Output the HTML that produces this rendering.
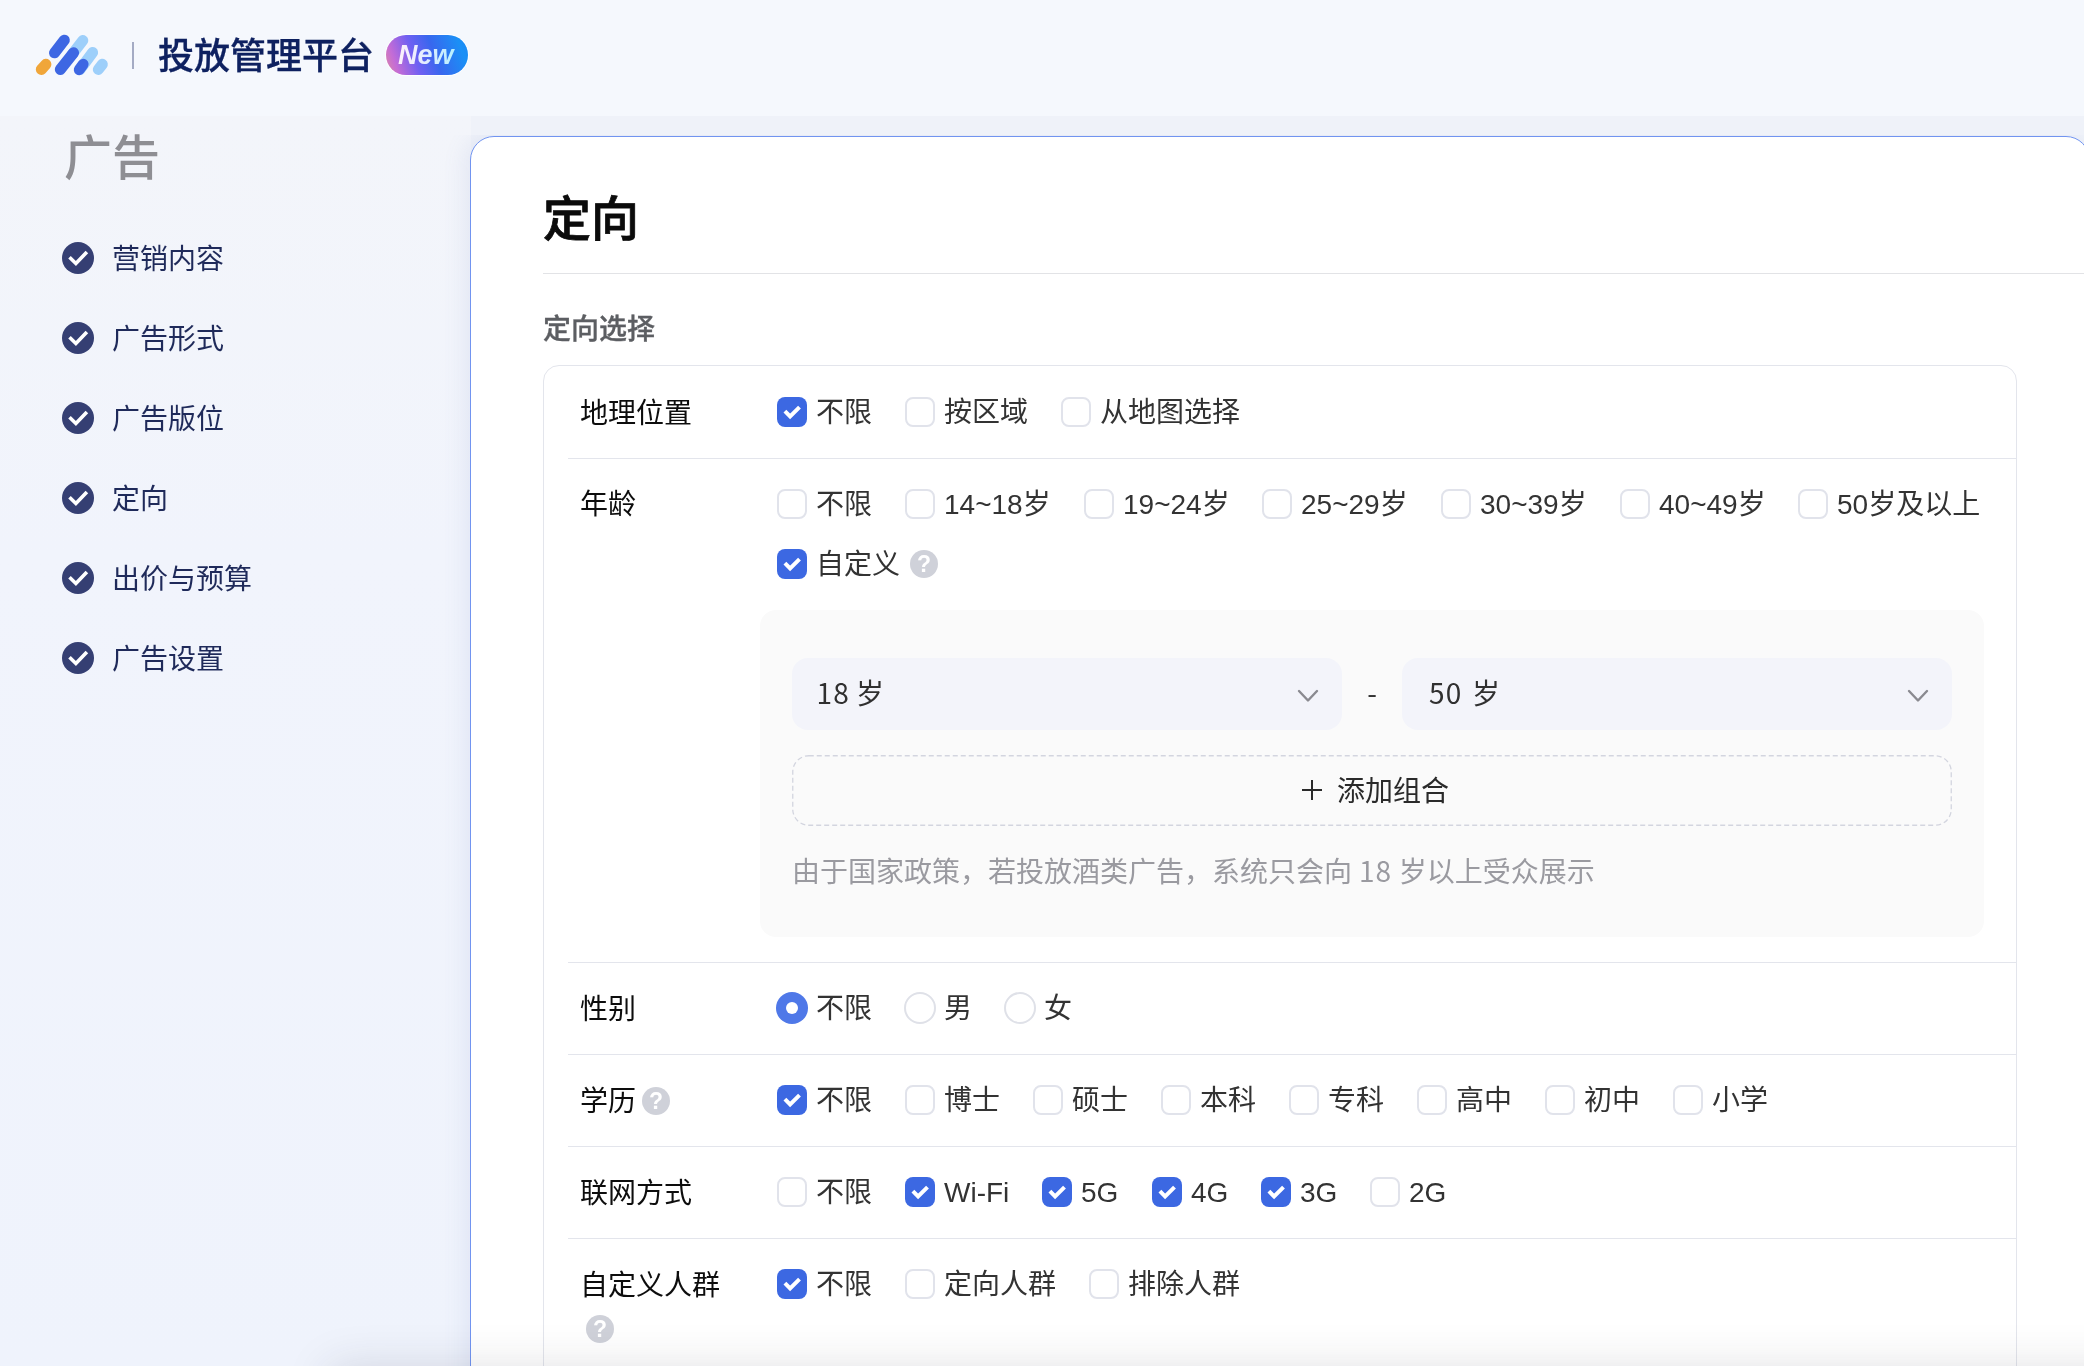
<!DOCTYPE html>
<html lang="zh-CN">
<head>
<meta charset="utf-8">
<title>投放管理平台</title>
<style>
*{box-sizing:border-box;margin:0;padding:0}
html,body{width:2084px;height:1366px;overflow:hidden}
body{position:relative;background:#eff2f9;font-family:"Liberation Sans","Noto Sans CJK SC",sans-serif;color:#333;-webkit-font-smoothing:antialiased}
.abs{position:absolute}
#root{position:absolute;left:0;top:0;width:2084px;height:1366px;overflow:hidden;will-change:transform;transform:translateZ(0)}
#header{position:absolute;left:0;top:0;width:2084px;height:116px;background:#f5f8fd}
#logo{position:absolute;left:30px;top:30px;width:84px;height:50px}
#hdiv{position:absolute;left:132px;top:42px;width:2px;height:27px;background:#a4abc4}
#title{position:absolute;left:158px;top:27px;font-size:36px;line-height:52px;font-weight:500;color:#0e2160;-webkit-text-stroke:0.3px #0e2160;letter-spacing:0;white-space:nowrap;font-family:"Noto Sans CJK SC",sans-serif}
#new{position:absolute;left:386px;top:35px;width:82px;height:40px;border-radius:20px;background:linear-gradient(70deg,#dd8aa4 0%,#c46cd6 14%,#7060f2 36%,#3867ee 58%,#1a90f6 88%,#1b86f4 100%);box-shadow:0 0 0 1px rgba(255,255,255,0.9);font-size:27px;line-height:40px;font-weight:700;font-style:italic;text-align:center;font-family:"Liberation Sans",sans-serif}
#new span{color:transparent;background:linear-gradient(90deg,#fff0fb 0%,#e6ecff 45%,#b6f0ff 100%);-webkit-background-clip:text;background-clip:text;padding:0 2px;position:relative;left:-1.3px}
#side{position:absolute;left:0;top:116px;width:471px;height:1250px;background:linear-gradient(180deg,#f3f5fa 0%,#f1f4fc 35%,#eff3fc 100%)}
#sidetitle{position:absolute;left:64px;top:120px;font-size:48px;line-height:68px;font-weight:500;color:#8e8e93;font-family:"Noto Sans CJK SC",sans-serif;white-space:nowrap}
.step{position:absolute;left:62px;height:40px;white-space:nowrap}
.step svg{position:absolute;left:0;top:4px;width:32px;height:32px}
.step span{position:absolute;left:50px;top:-1px;font-size:28px;line-height:40px;color:#1f2a5a;font-family:"Noto Sans CJK SC",sans-serif}
#card{position:absolute;left:470px;top:136px;width:1620px;height:1300px;background:#fff;border:1px solid #7194f0;border-radius:24px;box-shadow:-6px 0 22px rgba(100,120,190,0.10);clip-path:inset(-1px 0px 0px -60px)}
#h1{position:absolute;left:543px;top:181px;font-size:48px;line-height:68px;font-weight:500;color:#0b0b0b;-webkit-text-stroke:0.8px #0b0b0b;font-family:"Noto Sans CJK SC",sans-serif;white-space:nowrap}
#hline{position:absolute;left:543px;top:273px;width:1541px;height:1px;background:#e2e3e6}
#sub{position:absolute;left:543px;top:307px;font-size:28px;line-height:40px;font-weight:500;color:#5c5e62;-webkit-text-stroke:0.35px #5c5e62;font-family:"Noto Sans CJK SC",sans-serif;white-space:nowrap}
#box{position:absolute;left:543px;top:365px;width:1474px;height:1100px;border:1px solid #e3e5ec;border-radius:16px;background:#fff}
.sep{position:absolute;left:568px;width:1448px;height:1px;background:#e3e5ec}
.lbl{position:absolute;left:580px;margin-top:-1px;font-size:28px;line-height:40px;color:#0d0d0d;font-family:"Noto Sans CJK SC",sans-serif;white-space:nowrap}
.opt{position:absolute;height:40px;white-space:nowrap;font-size:28px;line-height:40px;color:#333}
.opt i{position:absolute;left:0;top:5px;width:30px;height:30px;border:2px solid #e1e3eb;border-radius:8px;background:#fff;display:block}
.opt.on i{border:none;background:#3c68e2}
.opt.on i svg{position:absolute;left:0;top:0;width:30px;height:30px}
.opt.r i{border-radius:50%;width:32px;height:32px;top:4px;left:-1px;border-color:#dfe1e8}
.opt.r.on i{background:#4f78e8}
.opt.r.on i:after{content:"";position:absolute;left:10px;top:10px;width:12px;height:12px;border-radius:50%;background:#fff}
.opt span{position:absolute;left:39px;top:1px;font-family:"Liberation Sans","Noto Sans CJK SC",sans-serif}
.q{position:absolute;width:28px;height:28px}
#agebox{position:absolute;left:760px;top:610px;width:1224px;height:327px;border-radius:16px;background:#fafafa}
.sel{position:absolute;top:658px;width:550px;height:72px;border-radius:16px;background:#f3f4fa;font-size:28px;line-height:68px;color:#303030;padding-left:27px;word-spacing:2px;letter-spacing:1.2px;font-family:"Noto Sans CJK SC",sans-serif;white-space:nowrap}
.sel svg{position:absolute;right:22px;top:28.5px;width:24px;height:18px}
#dash{position:absolute;left:1342px;top:658px;width:60px;height:72px;line-height:68px;font-size:28px;text-align:center;color:#333;font-family:"Noto Sans CJK SC",sans-serif}
#add{position:absolute;left:792px;top:755px;width:1160px;height:71px}
#addtxt{position:absolute;left:1337px;top:755px;height:71px;line-height:69px;font-size:28px;color:#2a2a2a;font-family:"Noto Sans CJK SC",sans-serif;white-space:nowrap}
#hint b{font-weight:400;letter-spacing:0.8px}
#hint{position:absolute;left:792px;top:850px;font-size:28px;line-height:40px;color:#9a9aa0;font-family:"Noto Sans CJK SC",sans-serif;white-space:nowrap}
#fade{position:absolute;left:330px;top:1376px;width:1900px;height:60px;background:#fff;box-shadow:0 -8px 46px rgba(40,40,60,0.15);pointer-events:none}
</style>
</head>
<body>
<div id="root">
<div id="header"></div>
<div id="side"></div>
<svg id="logo" viewBox="30 30 84 50">
 <g fill="none" stroke-linecap="round" stroke-width="11">
  <line x1="82.8" y1="40.5" x2="72" y2="54.5" stroke="#9dcffa"/>
  <line x1="92.6" y1="52.5" x2="80" y2="69.5" stroke="#9dcffa"/>
  <line x1="98.3" y1="69.5" x2="102.3" y2="64.3" stroke="#9dcffa"/>
  <line x1="41.3" y1="69.5" x2="45.9" y2="64.3" stroke="#f0a63a"/>
  <line x1="54.5" y1="52.8" x2="64.3" y2="40.2" stroke="#3d67e3"/>
  <line x1="60.3" y1="69.5" x2="73.6" y2="52.8" stroke="#3d67e3"/>
  <line x1="79.3" y1="69.7" x2="83.1" y2="64.3" stroke="#3d67e3"/>
 </g>
</svg>
<div id="hdiv"></div>
<div id="title">投放管理平台</div>
<div id="new"><span>New</span></div>
<div id="sidetitle">广告</div>
<!--STEPS-->
<div class="step" style="top:238px"><svg viewBox="0 0 32 32"><circle cx="16" cy="16" r="16" fill="#353f73"/><path d="M7.5 15.3 L13.9 21.5 L24.9 10.0" fill="none" stroke="#fff" stroke-width="3.6" stroke-linecap="butt" stroke-linejoin="miter"/></svg><span>营销内容</span></div>
<div class="step" style="top:318px"><svg viewBox="0 0 32 32"><circle cx="16" cy="16" r="16" fill="#353f73"/><path d="M7.5 15.3 L13.9 21.5 L24.9 10.0" fill="none" stroke="#fff" stroke-width="3.6" stroke-linecap="butt" stroke-linejoin="miter"/></svg><span>广告形式</span></div>
<div class="step" style="top:398px"><svg viewBox="0 0 32 32"><circle cx="16" cy="16" r="16" fill="#353f73"/><path d="M7.5 15.3 L13.9 21.5 L24.9 10.0" fill="none" stroke="#fff" stroke-width="3.6" stroke-linecap="butt" stroke-linejoin="miter"/></svg><span>广告版位</span></div>
<div class="step" style="top:478px"><svg viewBox="0 0 32 32"><circle cx="16" cy="16" r="16" fill="#353f73"/><path d="M7.5 15.3 L13.9 21.5 L24.9 10.0" fill="none" stroke="#fff" stroke-width="3.6" stroke-linecap="butt" stroke-linejoin="miter"/></svg><span>定向</span></div>
<div class="step" style="top:558px"><svg viewBox="0 0 32 32"><circle cx="16" cy="16" r="16" fill="#353f73"/><path d="M7.5 15.3 L13.9 21.5 L24.9 10.0" fill="none" stroke="#fff" stroke-width="3.6" stroke-linecap="butt" stroke-linejoin="miter"/></svg><span>出价与预算</span></div>
<div class="step" style="top:638px"><svg viewBox="0 0 32 32"><circle cx="16" cy="16" r="16" fill="#353f73"/><path d="M7.5 15.3 L13.9 21.5 L24.9 10.0" fill="none" stroke="#fff" stroke-width="3.6" stroke-linecap="butt" stroke-linejoin="miter"/></svg><span>广告设置</span></div>
<!--/STEPS-->
<div id="card"></div>
<div id="h1">定向</div>
<div id="hline"></div>
<div id="sub">定向选择</div>
<div id="box"></div>
<!--ROWS-->
<div class="lbl" style="top:392px">地理位置</div>
<div class="opt on" style="left:777px;top:392px"><i><svg viewBox="0 0 30 30"><path d="M7.9 14.2 L13.1 19.4 L22.5 10.1" fill="none" stroke="#fff" stroke-width="4" stroke-linecap="butt" stroke-linejoin="miter"/></svg></i><span>不限</span></div>
<div class="opt" style="left:905px;top:392px"><i></i><span>按区域</span></div>
<div class="opt" style="left:1061px;top:392px"><i></i><span>从地图选择</span></div>
<div class="sep" style="top:458px"></div>
<div class="lbl" style="top:483px">年龄</div>
<div class="opt" style="left:777px;top:484px"><i></i><span>不限</span></div>
<div class="opt" style="left:905px;top:484px"><i></i><span>14~18岁</span></div>
<div class="opt" style="left:1084px;top:484px"><i></i><span>19~24岁</span></div>
<div class="opt" style="left:1262px;top:484px"><i></i><span>25~29岁</span></div>
<div class="opt" style="left:1441px;top:484px"><i></i><span>30~39岁</span></div>
<div class="opt" style="left:1620px;top:484px"><i></i><span>40~49岁</span></div>
<div class="opt" style="left:1798px;top:484px"><i></i><span>50岁及以上</span></div>
<div class="opt on" style="left:777px;top:544px"><i><svg viewBox="0 0 30 30"><path d="M7.9 14.2 L13.1 19.4 L22.5 10.1" fill="none" stroke="#fff" stroke-width="4" stroke-linecap="butt" stroke-linejoin="miter"/></svg></i><span>自定义</span></div>
<svg class="q" style="left:910px;top:550px" viewBox="0 0 28 28"><circle cx="14" cy="14" r="14" fill="#cfd1d9"/><text x="14" y="22.3" text-anchor="middle" font-family="Liberation Sans, sans-serif" font-weight="700" font-size="23" fill="#fff">?</text></svg>
<div id="agebox"></div>
<div class="sel" style="left:792px;padding-left:24.5px;word-spacing:-1.5px">18 岁<svg viewBox="0 0 24 18"><path d="M3 4 L12 13.5 L21 4" fill="none" stroke="#8a8a90" stroke-width="2.4" stroke-linecap="round" stroke-linejoin="round"/></svg></div>
<div id="dash">-</div>
<div class="sel" style="left:1402px">50 岁<svg viewBox="0 0 24 18"><path d="M3 4 L12 13.5 L21 4" fill="none" stroke="#8a8a90" stroke-width="2.4" stroke-linecap="round" stroke-linejoin="round"/></svg></div>
<svg id="add" viewBox="0 0 1160 71"><rect x="0.75" y="0.75" width="1158.5" height="69.5" rx="16" ry="16" fill="none" stroke="#d3d5df" stroke-width="1.3" stroke-dasharray="5 3"/></svg>
<svg class="abs" style="left:1301px;top:779px;width:22px;height:22px" viewBox="0 0 22 22"><path d="M11 1 V21 M1 11 H21" fill="none" stroke="#2a2a2a" stroke-width="2"/></svg>
<div id="addtxt">添加组合</div>
<div id="hint">由于国家政策，若投放酒类广告，系统只会向<b> 18 </b>岁以上受众展示</div>
<div class="sep" style="top:962px"></div>
<div class="lbl" style="top:988px">性别</div>
<div class="opt r on" style="left:777px;top:988px"><i></i><span>不限</span></div>
<div class="opt r" style="left:905px;top:988px"><i></i><span>男</span></div>
<div class="opt r" style="left:1005px;top:988px"><i></i><span>女</span></div>
<div class="sep" style="top:1054px"></div>
<div class="lbl" style="top:1080px">学历</div>
<svg class="q" style="left:642px;top:1087px" viewBox="0 0 28 28"><circle cx="14" cy="14" r="14" fill="#cfd1d9"/><text x="14" y="22.3" text-anchor="middle" font-family="Liberation Sans, sans-serif" font-weight="700" font-size="23" fill="#fff">?</text></svg>
<div class="opt on" style="left:777px;top:1080px"><i><svg viewBox="0 0 30 30"><path d="M7.9 14.2 L13.1 19.4 L22.5 10.1" fill="none" stroke="#fff" stroke-width="4" stroke-linecap="butt" stroke-linejoin="miter"/></svg></i><span>不限</span></div>
<div class="opt" style="left:905px;top:1080px"><i></i><span>博士</span></div>
<div class="opt" style="left:1033px;top:1080px"><i></i><span>硕士</span></div>
<div class="opt" style="left:1161px;top:1080px"><i></i><span>本科</span></div>
<div class="opt" style="left:1289px;top:1080px"><i></i><span>专科</span></div>
<div class="opt" style="left:1417px;top:1080px"><i></i><span>高中</span></div>
<div class="opt" style="left:1545px;top:1080px"><i></i><span>初中</span></div>
<div class="opt" style="left:1673px;top:1080px"><i></i><span>小学</span></div>
<div class="sep" style="top:1146px"></div>
<div class="lbl" style="top:1172px">联网方式</div>
<div class="opt" style="left:777px;top:1172px"><i></i><span>不限</span></div>
<div class="opt on" style="left:905px;top:1172px"><i><svg viewBox="0 0 30 30"><path d="M7.9 14.2 L13.1 19.4 L22.5 10.1" fill="none" stroke="#fff" stroke-width="4" stroke-linecap="butt" stroke-linejoin="miter"/></svg></i><span>Wi-Fi</span></div>
<div class="opt on" style="left:1042px;top:1172px"><i><svg viewBox="0 0 30 30"><path d="M7.9 14.2 L13.1 19.4 L22.5 10.1" fill="none" stroke="#fff" stroke-width="4" stroke-linecap="butt" stroke-linejoin="miter"/></svg></i><span>5G</span></div>
<div class="opt on" style="left:1152px;top:1172px"><i><svg viewBox="0 0 30 30"><path d="M7.9 14.2 L13.1 19.4 L22.5 10.1" fill="none" stroke="#fff" stroke-width="4" stroke-linecap="butt" stroke-linejoin="miter"/></svg></i><span>4G</span></div>
<div class="opt on" style="left:1261px;top:1172px"><i><svg viewBox="0 0 30 30"><path d="M7.9 14.2 L13.1 19.4 L22.5 10.1" fill="none" stroke="#fff" stroke-width="4" stroke-linecap="butt" stroke-linejoin="miter"/></svg></i><span>3G</span></div>
<div class="opt" style="left:1370px;top:1172px"><i></i><span>2G</span></div>
<div class="sep" style="top:1238px"></div>
<div class="lbl" style="top:1264px">自定义人群</div>
<svg class="q" style="left:586px;top:1315px" viewBox="0 0 28 28"><circle cx="14" cy="14" r="14" fill="#cfd1d9"/><text x="14" y="22.3" text-anchor="middle" font-family="Liberation Sans, sans-serif" font-weight="700" font-size="23" fill="#fff">?</text></svg>
<div class="opt on" style="left:777px;top:1264px"><i><svg viewBox="0 0 30 30"><path d="M7.9 14.2 L13.1 19.4 L22.5 10.1" fill="none" stroke="#fff" stroke-width="4" stroke-linecap="butt" stroke-linejoin="miter"/></svg></i><span>不限</span></div>
<div class="opt" style="left:905px;top:1264px"><i></i><span>定向人群</span></div>
<div class="opt" style="left:1089px;top:1264px"><i></i><span>排除人群</span></div>
<!--/ROWS-->
<div id="fade"></div>
</div>
</body>
</html>
